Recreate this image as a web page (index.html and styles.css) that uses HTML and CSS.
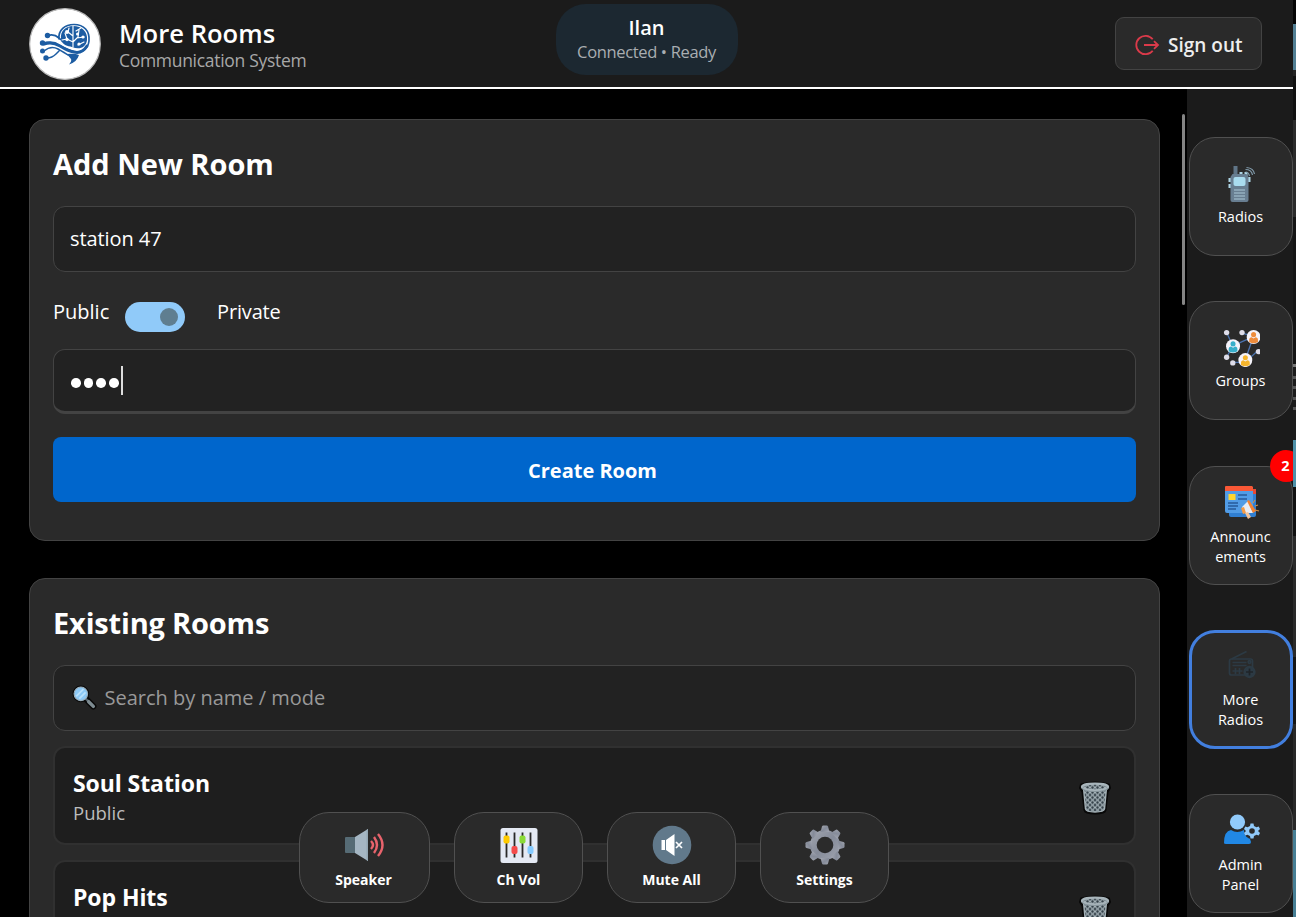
FILE: index.html
```html
<!DOCTYPE html>
<html lang="en">
<head>
<meta charset="utf-8">
<title>More Rooms</title>
<link rel="stylesheet" href="styles.css">
</head>
<body>
<svg class="defs" width="0" height="0" aria-hidden="true">
  <defs>
    <pattern id="mesh" width="5" height="5" patternUnits="userSpaceOnUse" patternTransform="translate(1 1.500)">
      <rect width="5" height="5" fill="#35424a"/>
      <path d="M-1 -1 6 6M-1 6 6 -1" stroke="#a9b6bc" stroke-width="1.100"/>
    </pattern>
    <linearGradient id="steel" x1="0" y1="0" x2="1" y2="1"><stop offset="0" stop-color="#a3a7b0"/><stop offset=".5" stop-color="#858b99"/><stop offset="1" stop-color="#a2a6b1"/></linearGradient>
    <symbol id="trash" viewBox="0 0 32 34">
      <path d="M2 3.500Q16-.500 30 3.500L31 7 28.500 11 26.500 29Q26 32.500 16 32.500T5.500 29L3.500 11 1 7Z" fill="#080808" stroke="#080808" stroke-width="2"/>
      <path d="M4.500 7 6.500 28Q7 31 16 31T25.500 28L27.500 7Z" fill="url(#mesh)" stroke="#a4b1b7" stroke-width="1.400"/>
      <ellipse cx="16" cy="6" rx="13" ry="3.300" fill="url(#mesh)" stroke="#a8b5bb" stroke-width="2.200"/>
      <path d="M3 7Q5 10.500 16 10.500T29 7" fill="none" stroke="#88969d" stroke-width="1.200"/>
    </symbol>
    <symbol id="person" viewBox="0 0 16 16">
      <circle cx="8" cy="8" r="7.500" fill="#f5f3fa"/>
      <circle cx="8" cy="5.500" r="2.700" fill="currentColor"/>
      <path d="M3.300 13.300V11Q3.300 8.300 6 8.300L8 9.600 10 8.300Q12.700 8.300 12.700 11V13.300Q8 16 3.300 13.300Z" fill="currentColor"/>
    </symbol>
  </defs>
</svg>
<div class="screen">
  <div class="app">
    <header class="topbar">
      <div class="brand">
        <svg class="logo" viewBox="0 0 72 72">
          <circle cx="36" cy="36" r="35.300" fill="#fff" stroke="#bbb" stroke-width="1.200"/>
          <g fill="none" stroke="#1c5ca2" stroke-linecap="round">
            <path d="M30 31C29 22 36 16.500 45 16.500C55 16.500 61 23 60 33C59 42 51 46 43 43C34 41 29 35 21 34.500H15" stroke-width="1.700"/>
            <path d="M19 27.500Q25 25.500 30 30Q36 36 43 36H55" stroke-width="1.700"/>
            <path d="M15 36Q23 33 31 38T45 44Q53 46 58 38" stroke-width="3"/>
            <path d="M15 43Q22 37 29 41T39 47M18 50Q23 50 27 46L30 43" stroke-width="1.500"/>
          </g>
          <path d="M32 31C31 23 37 18 44 18C53 18 59 24 58 32C57 40 50 42 43 39C38 38 35 37 32 33Z" fill="#1c5ca2"/>
          <g fill="none" stroke="#fff" stroke-width="1.150" stroke-linecap="round">
            <path d="M44 18V39M44 28 39 24 40 20M44 34 38 31 33 32M44 34 49 29 50 22M48 30 55 29M49 37 55 34M38 31 36 25M47 23 52 20"/>
          </g>
          <g fill="#fff"><circle cx="38" cy="24" r="2"/><circle cx="48.500" cy="26" r="1.500"/><circle cx="54" cy="29" r="1.600"/><circle cx="38" cy="31.500" r="1.700"/><circle cx="50" cy="36" r="1.600"/></g>
          <g fill="#1c5ca2"><circle cx="18.500" cy="27.500" r="2.700"/><circle cx="13.500" cy="35" r="2.700"/><circle cx="13.500" cy="43" r="2.500"/><circle cx="17" cy="50" r="2.700"/><path d="M37 46Q46 45 50 47Q48 54 40 56.500 43 53 42 51 40 48 37 46Z"/></g>
        </svg>
        <div class="brand-text">
          <h1 class="brand-title">More Rooms</h1>
          <p class="brand-sub">Communication System</p>
        </div>
      </div>
      <div class="status">
        <strong class="status-name">Ilan</strong>
        <span class="status-line">Connected • Ready</span>
      </div>
      <button class="signout">
        <svg class="signout-icon" viewBox="0 0 26 22" fill="none" stroke="#db3a4a" stroke-width="1.800"><path d="M18.700 5.300A9.200 9.200 0 1 0 18.700 16.700M10 11H24M20 7.200 24 11 20 14.800"/></svg>
        <span>Sign out</span>
      </button>
    </header>

    <div class="body">
      <main class="content">
        <section class="card card-new">
          <h2 class="card-title">Add New Room</h2>
          <div class="field name-field">station 47</div>
          <div class="mode">
            <span class="mode-public">Public</span>
            <span class="switch"><span class="knob"></span></span>
            <span class="mode-private">Private</span>
          </div>
          <div class="field pass-field"><i class="dot"></i><i class="dot"></i><i class="dot"></i><i class="dot"></i><span class="caret"></span></div>
          <button class="create"><span>Create Room</span></button>
        </section>

        <section class="card card-list">
          <h2 class="card-title title-list">Existing Rooms</h2>
          <div class="field search">
            <svg class="search-icon" viewBox="0 0 24 24">
              <circle cx="8.500" cy="8.500" r="8" fill="#080808"/><path d="M13 13 20.500 20.500" stroke="#080808" stroke-width="6" stroke-linecap="round"/>
              <path d="M13 13 16 16" stroke="#58656d" stroke-width="2"/><path d="M16 16 20.500 20.500" stroke="#7d8b91" stroke-width="3.300" stroke-linecap="round"/>
              <circle cx="8.500" cy="8.500" r="6.500" fill="#8cc8f5" stroke="#9db0bc" stroke-width="1"/><path d="M4 11 11 4M7 13 13 7" stroke="#b8e0fb" stroke-width="1.800"/>
            </svg>
            <span>Search by name / mode</span>
          </div>
          <article class="room">
            <div class="room-info"><h3 class="room-name">Soul Station</h3><p class="room-mode">Public</p></div>
            <svg class="trash"><use href="#trash"/></svg>
          </article>
          <article class="room">
            <div class="room-info"><h3 class="room-name">Pop Hits</h3></div>
            <svg class="trash"><use href="#trash"/></svg>
          </article>
        </section>
        <span class="scrollthumb"></span>
      </main>

      <nav class="side">
        <a class="tile">
          <svg class="tile-icon" viewBox="-4.500 0 38 38">
            <path d="M7 1h4v10H7z" fill="#607587"/><path d="M13 7h3v4h-3zM18 7h3v4h-3zM2 13h3v4H2zM2 19h3v4H2zM21 12h3v5h-3z" fill="#add5e5"/><path d="M4 12 6 9H20L22 12V35Q22 37 20 37H6Q4 37 4 35Z" fill="#687e91"/><rect x="7" y="12" width="12" height="9" rx="2" fill="#a9dcef"/>
            <path d="M7.500 25h11M7.500 28h11M7.500 31h11M7.500 34h11" stroke="#a9c8d8" stroke-width="1.200"/><path d="M19 7Q22 7 23 11M19 4.500Q25 4.500 26 10M20 2.500Q27 3 28 9" stroke="#829cac" fill="none" stroke-width="1.200"/>
          </svg>
          <span class="tile-label">Radios</span>
        </a>
        <a class="tile">
          <svg class="tile-icon" viewBox="-.500 .500 37 37">
            <path d="M10 17 4 4M10 17 30 8 18 4M10 17 4 28M22 31 30 8M9 33H22L34 22" stroke="#4a72ae" stroke-width="1.300" fill="none"/>
            <g fill="#dedde9"><circle cx="4" cy="4" r="2.600"/><circle cx="19" cy="4" r="2.600"/><circle cx="4" cy="28" r="2.600"/><circle cx="10" cy="33.500" r="2.600"/><circle cx="35" cy="22.500" r="2.600"/></g>
            <use href="#person" x="3" y="10" width="14.500" height="14.500" color="#38aeca"/><use href="#person" x="23" y="1" width="14.500" height="14.500" color="#ee8c3c"/><use href="#person" x="15" y="23.500" width="14.500" height="14.500" color="#f5b52d"/>
          </svg>
          <span class="tile-label">Groups</span>
        </a>
        <a class="tile tile-news">
          <svg class="tile-icon" viewBox="0 0 38 38">
            <path d="M7 7H34V33Q34 35 32 35H9Q7 35 7 33Z" fill="#307fd2"/><path d="M29 7h5v5h-5z" fill="#e64a36"/><path d="M3 7H31V31H5Q3 31 3 29Z" fill="#519ce6"/><path d="M3 5Q3 4 4 4H30L31 5V9H3Z" fill="#fa5836"/><rect x="6.500" y="12" width="7" height="6" fill="#ffd52f"/>
            <path d="M16 13h9M16 17h9M6 21h10M6 24h10M6 27h8" stroke="#265a9b" stroke-width="1.300"/><path d="M20 25 26 19 31 31 22 31Z" fill="#e9edf5"/><path d="M19 26 22 25 24 31 21 32Z" fill="#f69b45"/><path d="M25 19 27 18 34 29 31 31Z" fill="#f48231"/><path d="M23 31 26 30 29 35 26 37Z" fill="#f3c49a"/><path d="M31 21 33 18M33 24 36 23M33 28 37 29" stroke="#d48e43" stroke-width="1.200"/>
          </svg>
          <span class="tile-label">Announc<br>ements</span>
          <span class="badge">2</span>
        </a>
        <a class="tile tile-active">
          <svg class="tile-icon" viewBox="-.500 1 38 38" fill="none" stroke="#2c3a44" stroke-width="1.700">
            <path d="M9 12 24 4.500"/><rect x="7" y="12" width="23" height="16" rx="2"/><path d="M10 15.500H24M10 18.500H24M10 24H20M13 21V27M17 21V27"/><circle cx="27" cy="15" r="1.300"/><circle cx="27" cy="25" r="5.300" fill="#2c3a44"/><path d="M27 21.500V28.500M23.500 25H30.500" stroke="#1f2428" stroke-width="1.700"/>
          </svg>
          <span class="tile-label">More<br>Radios</span>
        </a>
        <a class="tile tile-admin">
          <svg class="tile-icon" viewBox="0 0 38 38">
            <path d="M2 32Q2 20 9 19Q15 23 22 19Q26 20 29 31 29 33 27 33H4Q2 33 2 32Z" fill="#2188e5"/><circle cx="15.500" cy="11" r="7.600" fill="#91cafa"/><circle cx="30" cy="20" r="8" fill="#2b2b2b"/>
            <g transform="translate(30 20)" fill="#91cafa"><path d="M-1.500-7.500H1.500L2-5 4.500-3.700 6.700-4.600 8-1.900 6 0 8 1.900 6.700 4.600 4.500 3.700 2 5 1.500 7.500H-1.500L-2 5-4.500 3.700-6.700 4.600-8 1.900-6 0-8-1.900-6.700-4.600-4.500-3.700-2-5Z"/><circle r="2.800" fill="#2b2b2b"/></g>
          </svg>
          <span class="tile-label">Admin<br>Panel</span>
        </a>
      </nav>
    </div>

    <div class="dock">
      <button class="dock-btn dock-first">
        <svg class="dock-icon" viewBox="0 0 40 40"><path d="M1 13Q1 12 2 12H12V28H2Q1 28 1 27Z" fill="#566b75"/><path d="M11 12 24 4V36L11 28Z" fill="#a5b6c3"/><path d="M22.500 5 24 4V36L22.500 35Z" fill="#94a7b4"/><path d="M27 16Q31 20 27 24M30 12Q36 20 30 28M34 9Q43 20 34 31" stroke="#e8636c" stroke-width="2.400" fill="none"/></svg>
        <span>Speaker</span>
      </button>
      <button class="dock-btn">
        <svg class="dock-icon" viewBox="0 0 40 40"><rect x="1.500" y="3" width="37" height="35" rx="2.500" fill="#e4e9f3"/><path d="M7.500 7.500V32.500M15.500 7.500V32.500M23.500 7.500V32.500M31.500 7.500V32.500" stroke="#292929" stroke-width="1.800"/><rect x="4.500" y="10.500" width="6" height="8" rx="2" fill="#ffcb00"/><rect x="12.500" y="21" width="6" height="8" rx="2" fill="#f44b4b"/><rect x="20.500" y="10.500" width="6" height="8" rx="2" fill="#8bdb37"/><rect x="28.500" y="21" width="6" height="8" rx="2" fill="#84caff"/></svg>
        <span>Ch Vol</span>
      </button>
      <button class="dock-btn">
        <svg class="dock-icon" viewBox="0 0 40 40"><circle cx="20" cy="20" r="19.300" fill="#61798b"/><path d="M9.500 15H13V25H9.500ZM14 15 22.500 9V31L14 25Z" fill="#fff"/><path d="M24 17 30 23M30 17 24 23" stroke="#fff" stroke-width="1.700"/></svg>
        <span>Mute All</span>
      </button>
      <button class="dock-btn">
        <svg class="dock-icon" viewBox="0 0 40 40"><g fill="url(#steel)"><circle cx="20" cy="20" r="15"/><path id="tooth" d="M15.500 7 17 1.500Q17.300.500 18.300.500H21.700Q22.700.500 23 1.500L24.500 7Z"/><use href="#tooth" transform="rotate(45 20 20)"/><use href="#tooth" transform="rotate(90 20 20)"/><use href="#tooth" transform="rotate(135 20 20)"/><use href="#tooth" transform="rotate(180 20 20)"/><use href="#tooth" transform="rotate(225 20 20)"/><use href="#tooth" transform="rotate(270 20 20)"/><use href="#tooth" transform="rotate(315 20 20)"/></g><circle cx="20" cy="20" r="8.300" fill="#2b2b2b"/></svg>
        <span>Settings</span>
      </button>
    </div>
  </div>
  <div class="edge"></div>
</div>
</body>
</html>
```

FILE: styles.css
```css
* { box-sizing: border-box; margin: 0; }
body { background: #000; color: #fff; font-family: "Open Sans", "Noto Sans", sans-serif; overflow: hidden; }
button { font-family: inherit; color: inherit; padding: 0; }
.defs { position: absolute; }
.screen { display: flex; width: 1296px; height: 917px; overflow: hidden; }
.app { position: relative; width: 1293px; height: 917px; overflow: hidden; }
.edge { width: 3px; background: linear-gradient(#050505 24px, #527f94 24px 70px, #242424 70px 76px, #111 76px 120px, #2b2b2b 120px 217px, #151515 217px 364px, #777 364px 367px, #1c1c1c 367px 376px, #555 376px 379px, #1c1c1c 379px 386px, #555 386px 389px, #1c1c1c 389px 397px, #555 397px 400px, #1c1c1c 400px 407px, #555 407px 410px, #1c1c1c 410px 440px, #4f91a9 440px 487px, #111 487px 536px, #2a2a2a 536px 657px, #151515 657px 724px, #282828 724px 830px, #477f95 830px); }

.topbar { display: grid; grid-template-columns: 1fr 182px 1fr; height: 89px; padding: 0 29px 0 30px; background: #1b1b1b; border-bottom: 2px solid #fff; }
.brand { display: flex; gap: 18px; margin-left: -1px; padding-top: 8px; }
.logo { width: 72px; height: 72px; }
.brand-text { padding-top: 10px; }
.brand-title { font-size: 25.600px; font-weight: 600; line-height: 32px; white-space: nowrap; }
.brand-sub { margin-top: -1px; font-size: 17.500px; letter-spacing: -.300px; line-height: 23px; color: #a8a8a8; white-space: nowrap; }
.status { display: flex; flex-direction: column; align-items: center; height: 71px; margin-top: 4px; padding: 10px 1px 0 0; border-radius: 30px; background: #1c2831; white-space: nowrap; }
.status-name { font-size: 20px; font-weight: 600; line-height: 27px; }
.status-line { font-size: 16.500px; letter-spacing: -.350px; line-height: 22px; color: #a9aeb2; }
.signout { display: flex; align-items: center; justify-self: end; gap: 8px; width: 147px; height: 53px; margin: 17px 2px 0 0; padding: 2px 0 0 18px; border: 1px solid #434343; border-radius: 9px; background: #2a2a2a; color: #eee; font-size: 19px; font-weight: 600; white-space: nowrap; }
.signout-icon { width: 26px; height: 22px; }

.body { display: flex; height: 828px; }
.content { position: relative; width: 1187px; padding: 30px 27px 0 29px; background: #000; overflow: hidden; }
.scrollthumb { position: absolute; top: 25px; right: 2.500px; width: 3px; height: 191px; border-radius: 2px; background: #858585; }
.card { padding: 23px; border: 1px solid #434343; border-radius: 16px; background: #2a2a2a; }
.card-new { height: 422px; }
.card-list { height: 500px; margin-top: 37px; }
.card-title { height: 44px; margin-bottom: 19px; font-size: 29px; font-weight: 700; line-height: 41px; white-space: nowrap; }
.title-list { letter-spacing: -.180px; }
.field { display: flex; align-items: center; height: 66px; padding: 0 16px 2px; border: 1.500px solid #434343; border-radius: 12px; background: #222; font-size: 20px; }
.name-field { letter-spacing: -.080px; }
.mode { display: flex; height: 40px; margin: 24px 0 13px; font-size: 20px; line-height: 32px; letter-spacing: -.150px; }
.mode-public { width: 72px; letter-spacing: 0; }
.switch { display: flex; justify-content: flex-end; align-items: center; width: 60px; height: 30px; margin-top: 6px; padding-right: 7px; border-radius: 15px; background: #90caf9; }
.knob { width: 18px; height: 18px; border-radius: 50%; background: #5f7e90; }
.mode-private { margin-left: 32px; }
.pass-field { height: 65px; gap: 3px; padding: 0 17px; border-bottom: 3px solid #434343; }
.dot { width: 9.700px; height: 9.700px; margin-top: 5px; border-radius: 50%; background: #fff; }
.caret { width: 2px; height: 29px; margin-left: -1px; background: #ddd; }
.create { display: block; width: 100%; height: 65px; margin-top: 23px; padding: 2px 4px 0 0; border: 0; border-radius: 8px; background: #0066cc; font-size: 20px; font-weight: 700; }
.search { margin-bottom: 15px; padding-left: 18px; color: #999; gap: 7.500px; }
.search-icon { width: 25px; height: 25px; }
.room { display: flex; justify-content: space-between; align-items: flex-start; height: 99px; margin-bottom: 15px; padding: 20px 23px 0 18px; border: 2px solid #303030; border-radius: 12px; background: #1e1e1e; }
.room-name { font-size: 23px; font-weight: 700; line-height: 31px; letter-spacing: -.080px; }
.room-mode { font-size: 18.500px; line-height: 27px; color: #bcbcbc; }
.trash { width: 32px; height: 34px; margin-top: 13px; }

.side { display: flex; flex-direction: column; gap: 45.250px; width: 106px; padding: 48px 0 0 2px; background: #1b1b1b; }
.tile { position: relative; display: flex; flex: none; flex-direction: column; align-items: center; justify-content: center; gap: 4px; width: 104px; height: 119px; padding: 0 1px 1px 0; border: 1.500px solid #505050; border-radius: 26px; background: #2a2a2a; font-size: 14.500px; line-height: 20px; text-align: center; }
.tile-news { padding: 2px 1px 0 0; gap: 7px; }
.tile-news .tile-icon { margin-top: -3px; }
.tile-active { padding: 0 1px 0 0; border: 3px solid #427fdf; }
.tile-admin { padding: 0 1px 0 0; }
.tile-admin .tile-icon { margin: -2px 0 2px; }
.tile-icon { flex: none; width: 38px; height: 38px; }
.badge { position: absolute; top: -17px; right: -10px; width: 32px; height: 32px; padding-right: 1px; border-radius: 50%; background: #f00; font-weight: 700; line-height: 32px; }

.dock { position: absolute; top: 812px; left: 299px; display: flex; gap: 24px; }
.dock-btn { display: flex; flex-direction: column; align-items: center; width: 129px; height: 91px; padding: 12px 0 0; gap: 5px; border: 1.500px solid #505050; border-radius: 30px; background: #2a2a2a; font-size: 14px; font-weight: 700; line-height: 20px; white-space: nowrap; }
.dock-first { width: 131px; padding-right: 2px; }
.dock-icon { flex: none; width: 40px; height: 40px; }
```
